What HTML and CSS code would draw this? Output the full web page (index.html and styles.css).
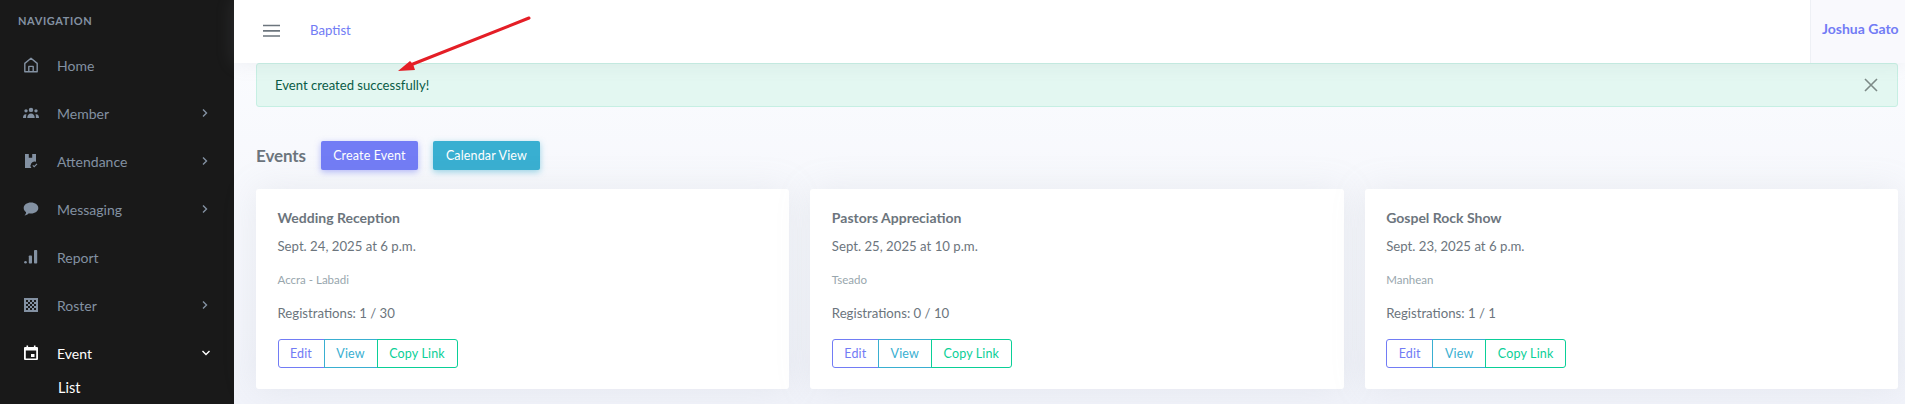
FILE: index.html
```html
<!DOCTYPE html>
<html lang="en">
<head>
  <meta charset="UTF-8">
  <title>Events</title>
  <link rel="stylesheet" href="styles.css">
</head>
<body>
  <aside class="sidebar">
    <div class="nav-title">NAVIGATION</div>
    <ul class="nav">
      <li class="nav-item">
        <svg class="nav-icon" viewBox="0 0 16 16"><path d="M1.800 14.800V6.400L8 1.300l6.200 5.100v8.400z M5.800 14.800V9.400h4.400v5.400" fill="none" stroke="#8391a2" stroke-width="1.400" stroke-linejoin="round"/></svg>
        <span class="nav-label">Home</span>
      </li>
      <li class="nav-item">
        <svg class="nav-icon" viewBox="0 0 18 16"><circle cx="9" cy="4.500" r="2.500" fill="#8391a2"/><circle cx="3.400" cy="5.600" r="1.900" fill="#8391a2"/><circle cx="14.600" cy="5.600" r="1.900" fill="#8391a2"/><path d="M4.800 13.500c0-3.200 1.700-5 4.200-5s4.200 1.800 4.200 5z M0 13.500c0-2.600 1-4.200 3.200-4.200l.8.100C3.400 10.600 3.500 12 3.500 13.500z M18 13.500c0-2.600-1-4.200-3.200-4.200l-.8.100c.6 1.200.5 2.600.5 4.100z" fill="#8391a2"/></svg>
        <span class="nav-label">Member</span>
        <svg class="chevron" viewBox="0 0 10 10"><path d="M3 1.500 6.500 5 3 8.500" fill="none" stroke="#8391a2" stroke-width="1.400"/></svg>
      </li>
      <li class="nav-item">
        <svg class="nav-icon" viewBox="0 0 16 16"><path d="M2 1h3.800v3.800h3.400V1H13v7.800a4 4 0 0 0-4.600 6.200H2z" fill="#8391a2"/><path d="M9.800 12.300l1.400 1.400 2.800-2.800" fill="none" stroke="#8391a2" stroke-width="1.100"/></svg>
        <span class="nav-label">Attendance</span>
        <svg class="chevron" viewBox="0 0 10 10"><path d="M3 1.500 6.500 5 3 8.500" fill="none" stroke="#8391a2" stroke-width="1.400"/></svg>
      </li>
      <li class="nav-item">
        <svg class="nav-icon" viewBox="0 0 16 16"><path d="M8 1.500c4.200 0 7.300 2.400 7.300 5.500S12.200 12.500 8 12.500c-.8 0-1.500-.1-2.200-.2C4.600 13.600 3 14.400 1.500 14.500c1-.9 1.500-2 1.600-3.300C1.500 10.200.7 8.700.7 7 .7 3.900 3.800 1.500 8 1.500z" fill="#8391a2"/></svg>
        <span class="nav-label">Messaging</span>
        <svg class="chevron" viewBox="0 0 10 10"><path d="M3 1.500 6.500 5 3 8.500" fill="none" stroke="#8391a2" stroke-width="1.400"/></svg>
      </li>
      <li class="nav-item">
        <svg class="nav-icon" viewBox="0 0 16 16"><circle cx="2.500" cy="13.200" r="1.300" fill="#8391a2"/><rect x="5.800" y="6.500" width="3.200" height="8" rx=".8" fill="#8391a2"/><rect x="11" y="1" width="3.200" height="13.500" rx=".8" fill="#8391a2"/></svg>
        <span class="nav-label">Report</span>
      </li>
      <li class="nav-item">
        <svg class="nav-icon" viewBox="0 0 16 16"><path fill="#8391a2" fill-rule="evenodd" d="M1 1h14v14H1z M3 3v2h2V3z M7 3v2h2V3z M11 3v2h2V3z M5 5v2h2V5z M9 5v2h2V5z M3 7v2h2V7z M7 7v2h2V7z M11 7v2h2V7z M5 9v2h2V9z M9 9v2h2V9z M3 11v2h2v-2z M7 11v2h2v-2z M11 11v2h2v-2z"/></svg>
        <span class="nav-label">Roster</span>
        <svg class="chevron" viewBox="0 0 10 10"><path d="M3 1.500 6.500 5 3 8.500" fill="none" stroke="#8391a2" stroke-width="1.400"/></svg>
      </li>
      <li class="nav-item is-active">
        <svg class="nav-icon" viewBox="0 0 16 16"><path fill="#fff" fill-rule="evenodd" d="M3.500.5h1.600v1.500h5.800V.5h1.600v1.500H14a1 1 0 0 1 1 1v11a1 1 0 0 1-1 1H2a1 1 0 0 1-1-1V3a1 1 0 0 1 1-1h1.500z M2.800 5.500v8h10.400v-8z"/><rect x="8" y="9" width="3.500" height="3" fill="#fff"/></svg>
        <span class="nav-label">Event</span>
        <svg class="chevron chevron-down" viewBox="0 0 10 10"><path d="M1.500 3 5 6.500 8.500 3" fill="none" stroke="#fff" stroke-width="1.400"/></svg>
      </li>
      <li class="nav-sub">List</li>
    </ul>
  </aside>

  <div class="main">
    <header class="topbar">
      <svg class="menu-icon" viewBox="0 0 18 14"><path d="M0 1.500h17M0 6.800h17M0 12h17" stroke="#6c757d" stroke-width="1.700"/></svg>
      <a class="org" href="#">Baptist</a>
      <div class="user">Joshua Gato</div>
    </header>

    <div class="content">
      <div class="alert">
        <span>Event created successfully!</span>
        <svg class="alert-close" viewBox="0 0 14 14"><path d="M1 1l12 12M13 1 1 13" stroke="#7d8a87" stroke-width="1.600"/></svg>
      </div>

      <div class="page-head">
        <h4 class="page-title">Events</h4>
        <a class="btn btn-primary" href="#">Create Event</a>
        <a class="btn btn-info" href="#">Calendar View</a>
      </div>

      <div class="cards">
        <div class="card">
          <h5 class="card-title">Wedding Reception</h5>
          <p class="card-date">Sept. 24, 2025 at 6 p.m.</p>
          <p class="card-place">Accra - Labadi</p>
          <p class="card-reg">Registrations: 1 / 30</p>
          <div class="btn-group">
            <a class="btn-o btn-o-primary" href="#">Edit</a><a class="btn-o btn-o-info" href="#">View</a><a class="btn-o btn-o-success" href="#">Copy Link</a>
          </div>
        </div>
        <div class="card">
          <h5 class="card-title">Pastors Appreciation</h5>
          <p class="card-date">Sept. 25, 2025 at 10 p.m.</p>
          <p class="card-place">Tseado</p>
          <p class="card-reg">Registrations: 0 / 10</p>
          <div class="btn-group">
            <a class="btn-o btn-o-primary" href="#">Edit</a><a class="btn-o btn-o-info" href="#">View</a><a class="btn-o btn-o-success" href="#">Copy Link</a>
          </div>
        </div>
        <div class="card">
          <h5 class="card-title">Gospel Rock Show</h5>
          <p class="card-date">Sept. 23, 2025 at 6 p.m.</p>
          <p class="card-place">Manhean</p>
          <p class="card-reg">Registrations: 1 / 1</p>
          <div class="btn-group">
            <a class="btn-o btn-o-primary" href="#">Edit</a><a class="btn-o btn-o-info" href="#">View</a><a class="btn-o btn-o-success" href="#">Copy Link</a>
          </div>
        </div>
      </div>
    </div>
  </div>

  <!-- annotation drawn over the screenshot -->
  <svg class="arrow" viewBox="0 0 150 66"><path d="M140 3 24 49" stroke="#e41e26" stroke-width="3" stroke-linecap="round"/><path d="M9 56 21 46 24 49 26 55z" fill="#e41e26"/></svg>
</body>
</html>
```

FILE: styles.css
```css
* {
  box-sizing: border-box;
  margin: 0;
  padding: 0;
}
html, body {
  height: 404px;
  overflow: hidden;
}
body {
  font-family: 'Lato', 'Open Sans', sans-serif;
  font-size: 14px;
  color: #6c757d;
  background-color: #f1f3fa;
  display: flex;
}
a {
  text-decoration: none;
}

/* sidebar */
.sidebar {
  width: 234px;
  flex-shrink: 0;
  background-color: #191919;
  color: #8391a2;
}
.nav-title {
  font-size: 11px;
  font-weight: 700;
  letter-spacing: 0.6px;
  padding: 14px 18px 0;
  height: 41px;
}
.nav {
  list-style: none;
}
.nav-item {
  height: 48px;
  display: flex;
  align-items: center;
  padding-left: 23px;
  font-size: 14px;
}
.nav-icon {
  width: 16px;
  height: 16px;
  margin-right: 18px;
  flex-shrink: 0;
}
.nav-label {
  flex: 1;
}
.chevron {
  width: 10px;
  height: 10px;
  margin-right: 24px;
}
.chevron-down {
  margin-right: 23px;
}
.is-active {
  color: #fff;
}
.nav-sub {
  color: #fff;
  font-size: 14.500px;
  padding-left: 58px;
  line-height: 22px;
}

/* top bar */
.main {
  flex: 1;
  min-width: 0;
}
.topbar {
  position: relative;
  height: 63px;
  background-color: #fff;
  display: flex;
  align-items: center;
  padding: 0 0 0 29px;
  box-shadow: 0 0 18px 0 rgba(154, 161, 171, 0.15);
}
.menu-icon {
  width: 18px;
  height: 14px;
  margin: 0 29px 2px 0;
}
.org {
  color: #727cf5;
  font-size: 13.200px;
  margin-bottom: 3px;
}
.user {
  margin-left: auto;
  width: 95px;
  height: 100%;
  border-left: 1px solid #eef0f5;
  background-color: #f9f9fd;
  color: #727cf5;
  font-weight: 700;
  font-size: 14px;
  line-height: 58px;
  padding-left: 11px;
  white-space: nowrap;
}

/* content */
.content {
  padding: 0 7px 0 22px;
  background: linear-gradient(#fafbfe, #f1f3fa);
  height: 341px;
}
.alert {
  height: 44px;
  background-color: #e3f7f1;
  border: 1px solid #c6efe3;
  border-radius: 3px;
  color: #0a5c46;
  font-size: 13.100px;
  display: flex;
  align-items: center;
  justify-content: space-between;
  padding: 0 19px 0 18px;
}
.alert-close {
  width: 14px;
  height: 14px;
}
.page-head {
  display: flex;
  align-items: center;
  margin-top: 34px;
  height: 29px;
}
.page-title {
  font-size: 17px;
  font-weight: 700;
  margin-right: 15px;
  letter-spacing: -0.1px;
}
.btn {
  height: 29px;
  line-height: 29px;
  text-align: center;
  border-radius: 2px;
  color: #fff;
  font-size: 12.500px;
  letter-spacing: 0.15px;
  margin-right: 15px;
}
.btn-primary {
  width: 97px;
  background-color: #727cf5;
  box-shadow: 0 2px 6px 0 rgba(114, 124, 245, 0.5);
}
.btn-info {
  width: 107px;
  background-color: #39afd1;
  box-shadow: 0 2px 6px 0 rgba(57, 175, 209, 0.5);
}

/* event cards */
.cards {
  display: grid;
  grid-template-columns: repeat(3, 1fr);
  gap: 21px;
  margin-top: 19px;
}
.card {
  background-color: #fff;
  border-radius: 3px;
  height: 200px;
  padding: 20px 21.500px 0;
  box-shadow: 0 0 35px 0 rgba(154, 161, 171, 0.15);
}
.card-title {
  font-size: 14px;
  font-weight: 700;
  line-height: 18px;
}
.card-date {
  font-size: 13.200px;
  line-height: 20px;
  margin-top: 9px;
}
.card-place {
  font-size: 11.500px;
  color: #98a6ad;
  line-height: 16px;
  margin-top: 16px;
}
.card-reg {
  font-size: 13.200px;
  line-height: 20px;
  margin-top: 15px;
}
.btn-group {
  display: flex;
  margin-top: 16px;
  height: 29px;
}
.btn-o {
  font-size: 12.500px;
  letter-spacing: 0.15px;
  line-height: 27px;
  text-align: center;
  border: 1px solid;
  margin-left: -1px;
}
.btn-o:first-child {
  margin-left: 0;
  border-radius: 3px 0 0 3px;
}
.btn-o:last-child {
  border-radius: 0 3px 3px 0;
}
.btn-o-primary {
  color: #727cf5;
  border-color: #727cf5;
  width: 47px;
}
.btn-o-info {
  color: #39afd1;
  border-color: #39afd1;
  width: 54px;
}
.btn-o-success {
  color: #0acf97;
  border-color: #0acf97;
  width: 81px;
}

.arrow {
  position: absolute;
  left: 389px;
  top: 15px;
  width: 150px;
  height: 66px;
}
```
